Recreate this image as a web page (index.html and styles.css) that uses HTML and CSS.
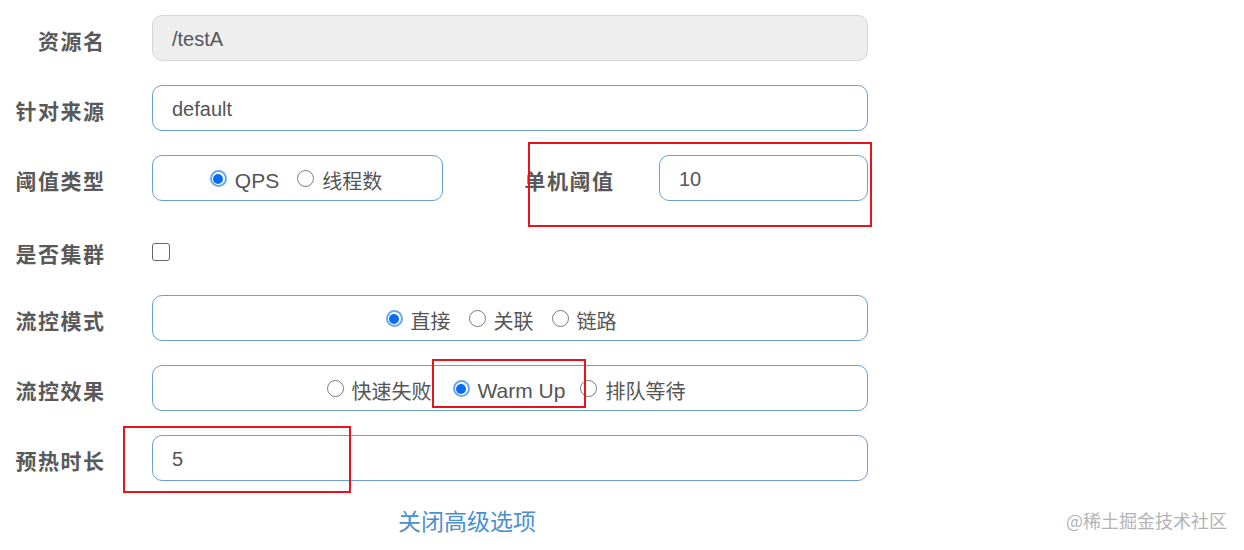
FILE: index.html
```html
<!DOCTYPE html>
<html lang="zh-CN">
<head>
<meta charset="utf-8">
<title>流控规则</title>
<link rel="stylesheet" href="styles.css">
</head>
<body>
<div class="page">
  <div class="form">
    <div class="row">
      <div class="label">资源名</div>
      <div class="input disabled">/testA</div>
    </div>
    <div class="row">
      <div class="label">针对来源</div>
      <div class="input">default</div>
    </div>
    <div class="row">
      <div class="label">阈值类型</div>
      <div class="input radios short">
        <span class="opt"><span class="radio on"></span><span class="txt en">QPS</span></span>
        <span class="opt"><span class="radio"></span><span class="txt">线程数</span></span>
      </div>
      <div class="label label2">单机阈值</div>
      <div class="input small">10</div>
    </div>
    <div class="row row-check">
      <div class="label">是否集群</div>
      <div class="ctl"><span class="checkbox"></span></div>
    </div>
    <div class="row">
      <div class="label">流控模式</div>
      <div class="input radios mode">
        <span class="opt"><span class="radio on"></span><span class="txt">直接</span></span>
        <span class="opt"><span class="radio"></span><span class="txt">关联</span></span>
        <span class="opt"><span class="radio"></span><span class="txt">链路</span></span>
      </div>
    </div>
    <div class="row">
      <div class="label">流控效果</div>
      <div class="input radios effect">
        <span class="opt first"><span class="radio"></span><span class="txt">快速失败</span></span>
        <span class="opt"><span class="radio on"></span><span class="txt en">Warm Up</span></span>
        <span class="opt"><span class="radio"></span><span class="txt">排队等待</span></span>
      </div>
    </div>
    <div class="row">
      <div class="label">预热时长</div>
      <div class="input">5</div>
    </div>
    <div class="link-row"><a class="link">关闭高级选项</a></div>
  </div>
  <div class="mark mark1"></div>
  <div class="mark mark2"></div>
  <div class="mark mark3"></div>
  <div class="watermark">@稀土掘金技术社区</div>
</div>
</body>
</html>
```
FILE: styles.css
```css
html, body {
  margin: 0;
  padding: 0;
  background: #fff;
}
.page {
  position: relative;
  width: 1244px;
  height: 550px;
  overflow: hidden;
  font-family: "Liberation Sans", "Noto Sans CJK SC", sans-serif;
}
.form {
  display: flex;
  flex-direction: column;
  gap: 24px;
  padding-top: 15px;
}
.row {
  display: flex;
  align-items: center;
  height: 46px;
}
.label {
  width: 105.5px;
  flex: none;
  text-align: right;
  padding-top: 4px;
  font-family: "Noto Sans CJK SC", sans-serif;
  font-weight: 700;
  font-size: 21px;
  color: #595959;
  letter-spacing: 1.5px;
  margin-right: -1.5px;
}
.input {
  margin-left: 48px;
  width: 716px;
  height: 46px;
  box-sizing: border-box;
  border: 1px solid #6c9fd2;
  border-radius: 10px;
  padding: 3px 19px 0;
  display: flex;
  align-items: center;
  font-family: "Liberation Sans", "Noto Sans CJK SC", sans-serif;
  font-size: 20px;
  color: #555;
  background: #fff;
}
.input.disabled {
  background: #eeeeee;
  border-color: #d4d4d4;
}
.radios {
  justify-content: center;
  gap: 18px;
  padding: 5px 0 0;
}
.radios.short {
  width: 291px;
  padding-right: 3px;
}
.radios.mode {
  padding-right: 18px;
}
.effect {
  gap: 15px;
  padding-right: 8px;
}
.effect .first {
  margin-right: 6px;
}
.opt {
  display: inline-flex;
  align-items: center;
  gap: 8px;
}
.txt {
  font-family: "Liberation Sans", "Noto Sans CJK SC", sans-serif;
  font-size: 20px;
  color: #555;
}
.txt.en {
  font-size: 21px;
}
.radio {
  width: 17px;
  height: 17px;
  box-sizing: border-box;
  border: 1px solid #7a7a7a;
  border-radius: 50%;
  background: #fff;
  margin-top: -4px;
  position: relative;
}
.radio.on {
  border: 2px solid #6aa8f2;
}
.radio.on::after {
  content: "";
  position: absolute;
  left: 1.5px;
  top: 1.5px;
  width: 10px;
  height: 10px;
  border-radius: 50%;
  background: #0b6cf0;
}
.label2 {
  width: 171.5px;
  margin-left: 0;
}
.input.small {
  width: 209px;
  margin-left: 46px;
}
.row-check {
  padding-top: 6px;
  box-sizing: border-box;
}
.ctl {
  margin-left: 48px;
  display: flex;
  align-items: center;
}
.checkbox {
  display: block;
  width: 18px;
  height: 18px;
  box-sizing: border-box;
  border: 1.5px solid #666;
  border-radius: 3px;
  margin-top: 2px;
}
.link-row {
  width: 934px;
  height: 32px;
  display: flex;
  justify-content: center;
  align-items: center;
}
.link {
  font-family: "Noto Sans CJK SC", sans-serif;
  font-size: 23px;
  color: #4a90d0;
  margin-top: -3px;
}
.mark {
  position: absolute;
  border: 2px solid #e8141b;
  box-sizing: border-box;
}
.mark1 {
  left: 528px;
  top: 142px;
  width: 344px;
  height: 85px;
}
.mark2 {
  left: 432px;
  top: 359px;
  width: 154px;
  height: 49px;
}
.mark3 {
  left: 123px;
  top: 426px;
  width: 228px;
  height: 67px;
}
.watermark {
  position: absolute;
  left: 1066px;
  top: 508px;
  font-family: "Noto Sans CJK SC", sans-serif;
  font-size: 18px;
  line-height: 24px;
  color: #b4b4b4;
}
```
